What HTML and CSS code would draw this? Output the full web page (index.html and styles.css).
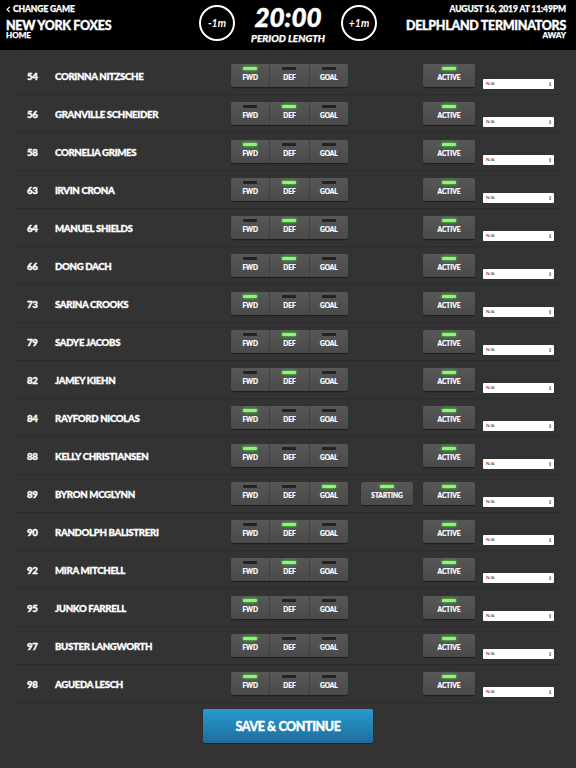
FILE: index.html
```html
<!DOCTYPE html>
<html>
<head>
<meta charset="utf-8">
<link rel="stylesheet" href="styles.css">
</head>
<body>
<header class="top">
  <div class="home">
    <div class="back"><svg class="chev" viewBox="0 0 6 8" width="5" height="7"><path d="M4.5 0.8 L1.3 4 L4.5 7.2" fill="none" stroke="#fff" stroke-width="1.4"/></svg>CHANGE GAME</div>
    <div class="team">NEW YORK FOXES</div>
    <div class="side">HOME</div>
  </div>
  <div class="clock">
    <div class="circle">-1m</div>
    <div class="time">
      <div class="digits">20:00</div>
      <div class="plabel">PERIOD LENGTH</div>
    </div>
    <div class="circle">+1m</div>
  </div>
  <div class="away">
    <div class="date">AUGUST 16, 2019 AT 11:49PM</div>
    <div class="team">DELPHLAND TERMINATORS</div>
    <div class="side">AWAY</div>
  </div>
</header>

<main class="roster" id="roster"></main>

<div class="actions"><button class="save">SAVE &amp; CONTINUE</button></div>

<script>
var players = [
  ["54","CORINNA NITZSCHE",0,false],
  ["56","GRANVILLE SCHNEIDER",1,false],
  ["58","CORNELIA GRIMES",0,false],
  ["63","IRVIN CRONA",1,false],
  ["64","MANUEL SHIELDS",1,false],
  ["66","DONG DACH",1,false],
  ["73","SARINA CROOKS",0,false],
  ["79","SADYE JACOBS",1,false],
  ["82","JAMEY KIEHN",1,false],
  ["84","RAYFORD NICOLAS",0,false],
  ["88","KELLY CHRISTIANSEN",0,false],
  ["89","BYRON MCGLYNN",2,true],
  ["90","RANDOLPH BALISTRERI",1,false],
  ["92","MIRA MITCHELL",1,false],
  ["95","JUNKO FARRELL",0,false],
  ["97","BUSTER LANGWORTH",0,false],
  ["98","AGUEDA LESCH",0,false]
];
var labels = ["FWD","DEF","GOAL"];
var html = "";
players.forEach(function(p){
  html += '<div class="row"><span class="num">'+p[0]+'</span><span class="name">'+p[1]+'</span><div class="seg">';
  labels.forEach(function(l,i){
    html += '<div class="opt"><span class="led'+(i===p[2]?' on':'')+'"></span><span class="lbl">'+l+'</span></div>';
  });
  html += '</div>';
  html += p[3] ? '<div class="btn start"><span class="led on"></span><span class="lbl">STARTING</span></div>' : '<div class="start-empty"></div>';
  html += '<div class="btn act"><span class="led on"></span><span class="lbl">ACTIVE</span></div>';
  html += '<div class="select"><span>N/A</span><span class="arr">&#8661;</span></div></div>';
});
document.getElementById("roster").innerHTML = html;
</script>
</body>
</html>
```

FILE: styles.css
```css
* { box-sizing: border-box; }
html, body { margin: 0; padding: 0; }
body {
  background: #333333;
  width: 576px;
  height: 768px;
  overflow: hidden;
  font-family: "Lato", "Open Sans", sans-serif;
  font-weight: 900;
  color: #fff;
  -webkit-text-stroke: 0.25px #fff;
}
.top {
  height: 50px;
  background: #000;
  display: grid;
  grid-template-columns: 1fr auto 1fr;
  align-items: start;
  padding: 0 10px 0 6px;
}
.home { padding-top: 4px; }
.back {
  font-size: 8.5px;
  line-height: 11px;
  display: flex;
  align-items: center;
  gap: 2px;
  letter-spacing: -0.1px;
}
.chev { display: block; }
.team {
  font-size: 12.5px;
  line-height: 12px;
  margin-top: 5px;
  white-space: nowrap;
  letter-spacing: -0.3px;
  -webkit-text-stroke: 0.35px #fff;
}
.side { font-size: 8px; line-height: 7px; margin-top: 0; }
.away { text-align: right; padding-top: 4px; }
.date { font-size: 8.5px; line-height: 11px; letter-spacing: -0.1px; }
.clock {
  display: flex;
  align-items: flex-start;
  gap: 14px;
  padding-top: 5px;
  margin-left: 4px;
}
.circle {
  width: 36px;
  height: 36px;
  border: 2px solid #fff;
  border-radius: 50%;
  display: flex;
  align-items: center;
  justify-content: center;
  font-style: italic;
  font-weight: 700;
  font-size: 10.5px;
  -webkit-text-stroke: 0;
}
.time { text-align: center; width: 78px; }
.digits {
  font-style: italic;
  font-weight: 900;
  font-size: 26px;
  line-height: 26px;
  margin-top: -1px;
  -webkit-text-stroke: 0.5px #fff;
}
.plabel {
  font-style: italic;
  font-weight: 900;
  font-size: 10px;
  line-height: 12px;
  margin-top: 2px;
  white-space: nowrap;
}
.roster { padding-top: 7px; }
.row {
  margin: 0 16px;
  height: 38px;
  border-bottom: 1px solid #2b2b2b;
  display: grid;
  grid-template-columns: 28px 176px 117px 65px 62px 79px;
  align-items: center;
  padding-left: 11px;
  font-size: 9.7px;
  letter-spacing: -0.35px;
}
.num, .name { white-space: nowrap; -webkit-text-stroke: 0.3px #fff; }
.seg {
  display: flex;
  height: 23px;
  border-radius: 2px;
  background: linear-gradient(#575757, #4a4a4a);
  box-shadow: 0 1px 1px rgba(0,0,0,0.45);
  overflow: hidden;
  letter-spacing: 0;
}
.opt {
  flex: 1;
  display: flex;
  flex-direction: column;
  align-items: center;
  padding-top: 3px;
  border-left: 1px solid #404040;
}
.opt:first-child { border-left: none; }
.led {
  display: block;
  width: 14px;
  height: 3px;
  border-radius: 1px;
  background: #232323;
}
.led.on {
  background: #8ef57a;
  box-shadow: 0 0 2px #4fd83a, 0 0 4px rgba(80,220,60,0.7);
}
.lbl {
  font-size: 6.5px;
  line-height: 8px;
  margin-top: 4px;
  letter-spacing: 0;
  -webkit-text-stroke: 0.2px #fff;
}
.btn {
  height: 23px;
  width: 52px;
  border-radius: 2px;
  background: linear-gradient(#575757, #4a4a4a);
  box-shadow: 0 1px 1px rgba(0,0,0,0.45);
  display: flex;
  flex-direction: column;
  align-items: center;
  padding-top: 3px;
}
.start, .start-empty { margin-left: 13px; }
.start-empty { width: 52px; }
.act { margin-left: 10px; }
.select {
  margin-left: 8px;
  margin-top: 16px;
  width: 71px;
  height: 10px;
  background: #fff;
  border-radius: 1px;
  color: #222;
  font-size: 4.5px;
  font-weight: 400;
  letter-spacing: 0;
  -webkit-text-stroke: 0;
  display: flex;
  align-items: center;
  justify-content: space-between;
  padding: 0 2px 0 3px;
}
.arr { font-size: 5px; }
.actions {
  display: flex;
  justify-content: center;
  padding-top: 6px;
}
.save {
  width: 170px;
  height: 34px;
  border: none;
  border-radius: 2px;
  background: linear-gradient(#2899cd, #1f6d9e);
  color: #fff;
  font-family: "Lato", "Open Sans", sans-serif;
  font-weight: 900;
  font-size: 12.5px;
  letter-spacing: -0.4px;
  -webkit-text-stroke: 0.35px #fff;
  padding: 0;
  box-shadow: 0 1px 1px rgba(0,0,0,0.4);
}
```
